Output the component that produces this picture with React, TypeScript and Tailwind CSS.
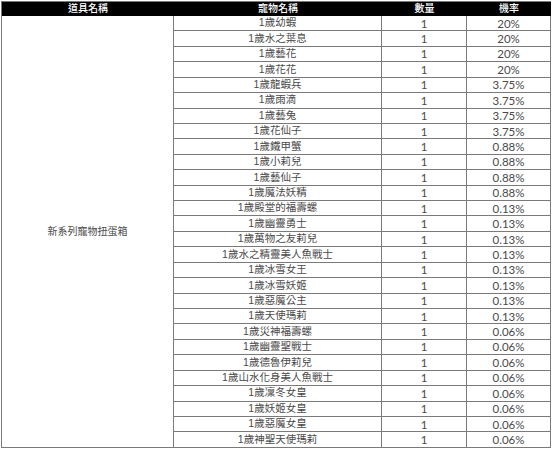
import React from "react";

const rows: [string, string, string][] = [
  ["1歲幼蝦", "1", "20%"],
  ["1歲水之葉息", "1", "20%"],
  ["1歲藝花", "1", "20%"],
  ["1歲花花", "1", "20%"],
  ["1歲龍蝦兵", "1", "3.75%"],
  ["1歲雨滴", "1", "3.75%"],
  ["1歲藝兔", "1", "3.75%"],
  ["1歲花仙子", "1", "3.75%"],
  ["1歲鐵甲蟹", "1", "0.88%"],
  ["1歲小莉兒", "1", "0.88%"],
  ["1歲藝仙子", "1", "0.88%"],
  ["1歲魔法妖精", "1", "0.88%"],
  ["1歲殿堂的福壽螺", "1", "0.13%"],
  ["1歲幽靈勇士", "1", "0.13%"],
  ["1歲萬物之友莉兒", "1", "0.13%"],
  ["1歲水之精靈美人魚戰士", "1", "0.13%"],
  ["1歲冰雪女王", "1", "0.13%"],
  ["1歲冰雪妖姬", "1", "0.13%"],
  ["1歲惡魔公主", "1", "0.13%"],
  ["1歲天使瑪莉", "1", "0.13%"],
  ["1歲災神福壽螺", "1", "0.06%"],
  ["1歲幽靈聖戰士", "1", "0.06%"],
  ["1歲德魯伊莉兒", "1", "0.06%"],
  ["1歲山水化身美人魚戰士", "1", "0.06%"],
  ["1歲凜冬女皇", "1", "0.06%"],
  ["1歲妖姬女皇", "1", "0.06%"],
  ["1歲惡魔女皇", "1", "0.06%"],
  ["1歲神聖天使瑪莉", "1", "0.06%"],
];

const cjk = "font-['Liberation_Sans','Noto_Sans_CJK_TC',sans-serif]";
const num = "font-['Lato','Liberation_Sans',sans-serif]";

export default function App() {
  return (
    <div className="w-[553px] h-[451px] bg-white pl-px pt-px">
      <div className={`w-[550px] border-l border-t border-[#7a7a7a] text-[10px] text-[#4a4a4a] ${cjk}`}>
        <div className="flex h-[14px] bg-black text-white font-medium leading-[14px]">
          <div className="w-[172px] text-center">道具名稱</div>
          <div className="w-[208px] text-center">寵物名稱</div>
          <div className="w-[85px] text-center">數量</div>
          <div className="w-[84px] text-center">機率</div>
        </div>
        <div className="flex">
          <div className="w-[172px] border-r border-b border-[#7a7a7a] flex items-center justify-center">
            新系列寵物扭蛋箱
          </div>
          <div className="flex flex-col">
            {rows.map(([name, qty, rate], i) => (
              <div key={i} className="flex h-[15.43px] border-b border-[#7a7a7a] items-center">
                <div className="w-[208px] h-full border-r border-[#7a7a7a] flex items-center justify-center text-[10.5px]">
                  {name}
                </div>
                <div className={`w-[85px] h-full border-r border-[#7a7a7a] flex items-center justify-center text-[11.5px] ${num}`}>
                  {qty}
                </div>
                <div className={`w-[84px] h-full border-r border-[#7a7a7a] flex items-center justify-center text-[11.5px] ${num}`}>
                  {rate}
                </div>
              </div>
            ))}
          </div>
        </div>
      </div>
    </div>
  );
}
